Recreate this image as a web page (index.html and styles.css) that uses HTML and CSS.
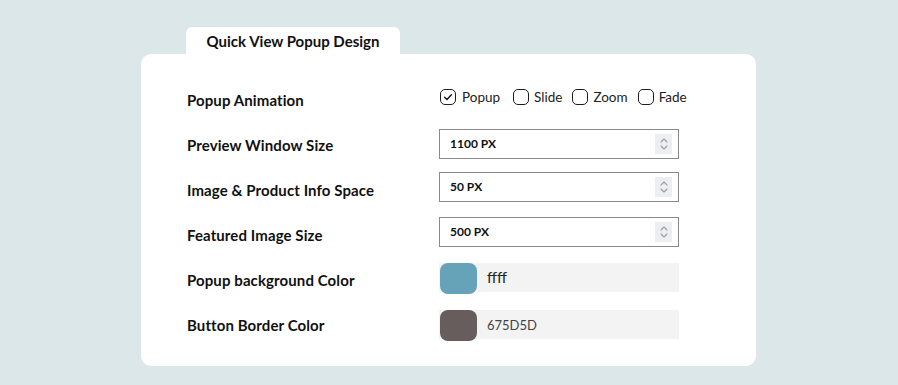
FILE: index.html
```
<!DOCTYPE html>
<html>
<head>
<meta charset="utf-8">
<link rel="stylesheet" href="styles.css">
</head>
<body>
<div class="wrap">
  <div class="tab">Quick View Popup Design</div>
  <div class="card">
    <div class="row">
      <div class="label">Popup Animation</div>
      <div class="options">
        <span class="opt first"><span class="box"><svg width="12" height="12" viewBox="0 0 12 12"><path d="M2.6 6.2 L5 8.5 L9.4 3.8" fill="none" stroke="#1d1d1d" stroke-width="1.5" stroke-linecap="round" stroke-linejoin="round"/></svg></span>Popup</span>
        <span class="opt"><span class="box"></span>Slide</span>
        <span class="opt"><span class="box"></span>Zoom</span>
        <span class="opt"><span class="box"></span>Fade</span>
      </div>
    </div>
    <div class="row">
      <div class="label">Preview Window Size</div>
      <div class="num shift-1"><span>1100 PX</span><span class="spin"><svg width="10" height="16" viewBox="0 0 10 16"><path d="M2 6 L5 3 L8 6 M2 10 L5 13 L8 10" fill="none" stroke="#9a9ea6" stroke-width="1.1" stroke-linecap="round" stroke-linejoin="round"/></svg></span></div>
    </div>
    <div class="row">
      <div class="label">Image &amp; Product Info Space</div>
      <div class="num shift-3"><span>50 PX</span><span class="spin"><svg width="10" height="16" viewBox="0 0 10 16"><path d="M2 6 L5 3 L8 6 M2 10 L5 13 L8 10" fill="none" stroke="#9a9ea6" stroke-width="1.1" stroke-linecap="round" stroke-linejoin="round"/></svg></span></div>
    </div>
    <div class="row">
      <div class="label">Featured Image Size</div>
      <div class="num shift-3"><span>500 PX</span><span class="spin"><svg width="10" height="16" viewBox="0 0 10 16"><path d="M2 6 L5 3 L8 6 M2 10 L5 13 L8 10" fill="none" stroke="#9a9ea6" stroke-width="1.1" stroke-linecap="round" stroke-linejoin="round"/></svg></span></div>
    </div>
    <div class="row">
      <div class="label">Popup background Color</div>
      <div class="color shift-2"><span class="swatch blue"></span><span class="hex big">ffff</span></div>
    </div>
    <div class="row">
      <div class="label">Button Border Color</div>
      <div class="color"><span class="swatch brown"></span><span class="hex">675D5D</span></div>
    </div>
  </div>
</div>
</body>
</html>
```
FILE: styles.css
```
* { box-sizing: border-box; }
html, body { margin: 0; padding: 0; }
body {
  background: #dce7ea;
  font-family: "Lato", "Noto Sans", sans-serif;
  color: #111;
  width: 898px;
  height: 385px;
  overflow: hidden;
}
.wrap {
  margin-left: 141px;
  padding-top: 27px;
  width: 615px;
}
.tab {
  margin-left: 45px;
  width: 214px;
  height: 28px;
  background: #fff;
  border-radius: 6px 6px 0 0;
  font-weight: 700;
  font-size: 15px;
  text-align: center;
  line-height: 28px;
}
.card {
  background: #fff;
  border-radius: 10px;
  margin-top: -1px;
  padding: 23px 0 18px 46px;
  height: 312px;
}
.row {
  display: flex;
  align-items: center;
  height: 45px;
}
.label {
  width: 252px;
  font-weight: 700;
  font-size: 15px;
  letter-spacing: 0.1px;
}
.options {
  display: flex;
  align-items: center;
  font-size: 13.5px;
  color: #222;
  margin-left: 1px;
  margin-top: -6px;
}
.opt {
  display: flex;
  align-items: center;
  margin-right: 10px;
}
.opt.first { margin-right: 13px; }
.box {
  width: 16px;
  height: 16px;
  border: 1.5px solid #1d1d1d;
  border-radius: 5px;
  margin-right: 5px;
  display: flex;
  align-items: center;
  justify-content: center;
}
.opt.first .box { margin-right: 6px; }
.num {
  width: 240px;
  height: 30px;
  border: 1px solid #8a8a8a;
  display: flex;
  align-items: center;
  justify-content: space-between;
  padding: 0 6px 0 10px;
  font-size: 12px;
  font-weight: 700;
  color: #111;
}
.shift-1 { margin-top: -2px; }
.shift-2 { margin-top: -4px; }
.shift-3 { margin-top: -6px; }
.spin {
  width: 17px;
  height: 20px;
  background: #eceef2;
  display: flex;
  align-items: center;
  justify-content: center;
}
.color {
  width: 240px;
  height: 29px;
  background: #f3f3f3;
  display: flex;
  align-items: center;
}
.swatch {
  width: 37px;
  height: 31px;
  border-radius: 8px;
  margin-top: 2px;
  margin-left: 1px;
}
.swatch.blue { background: #66a3b8; }
.swatch.brown { background: #675d5d; }
.hex {
  margin-left: 10px;
  font-size: 13px;
  color: #444;
}
.hex.big {
  font-size: 15px;
  color: #222;
  margin-top: -2px;
}
```
